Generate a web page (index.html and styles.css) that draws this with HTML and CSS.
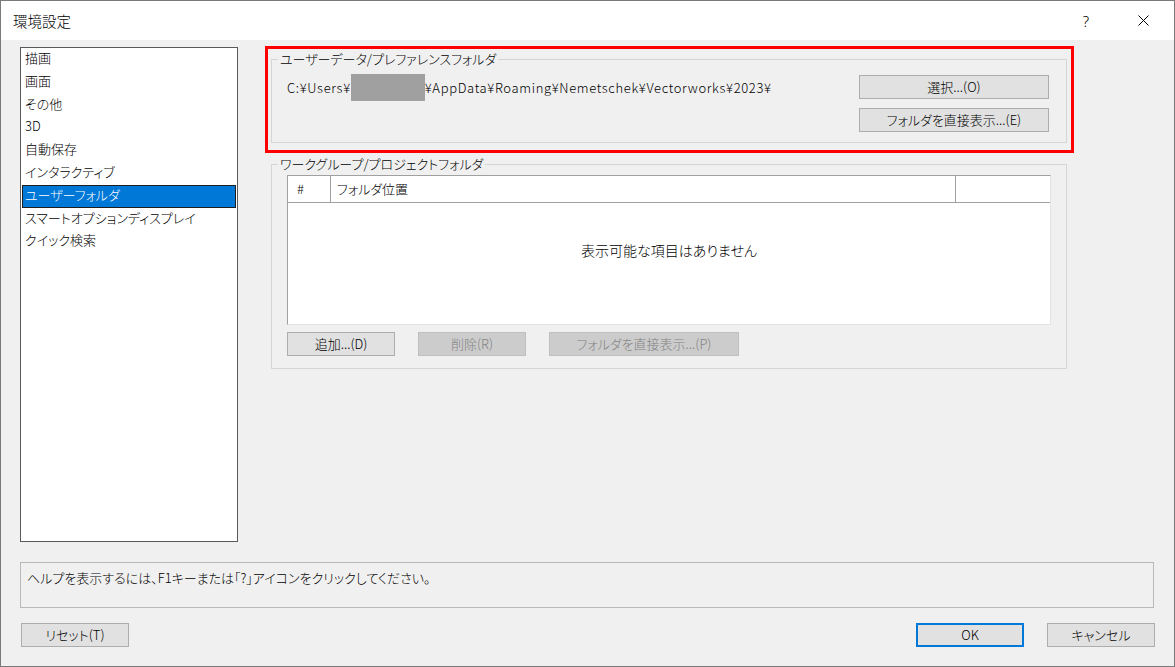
FILE: index.html
```html
<!DOCTYPE html>
<html lang="ja">
<head>
    <meta charset="UTF-8">
    <title>環境設定</title>
    <link rel="stylesheet" href="styles.css">
</head>
<body>
    <div class="window">
        <div class="titlebar">
            <span class="title">環境設定</span>
            <span class="caption-btn help">?</span>
            <span class="caption-btn close">
                <svg width="11" height="11" viewBox="0 0 11 11">
                    <path d="M0.5 0.5L10.5 10.5M10.5 0.5L0.5 10.5" stroke="#000" stroke-width="1" fill="none"/>
                </svg>
            </span>
        </div>

        <div class="client">
            <div class="main">
                <ul class="category-list">
                    <li>描画</li>
                    <li>画面</li>
                    <li>その他</li>
                    <li>3D</li>
                    <li>自動保存</li>
                    <li>インタラクティブ</li>
                    <li class="selected">ユーザーフォルダ</li>
                    <li>スマートオプションディスプレイ</li>
                    <li>クイック検索</li>
                </ul>

                <div class="panel">
                    <div class="highlight">
                        <fieldset class="group">
                            <legend>ユーザーデータ/プレファレンスフォルダ</legend>
                            <div class="user-folder">
                                <div class="path">C:¥Users¥<span class="redacted"></span>¥AppData¥Roaming¥Nemetschek¥Vectorworks¥2023¥</div>
                                <div class="btn-col">
                                    <button class="btn wide">選択...(O)</button>
                                    <button class="btn wide">フォルダを直接表示...(E)</button>
                                </div>
                            </div>
                        </fieldset>
                    </div>

                    <fieldset class="group workgroup">
                        <legend>ワークグループ/プロジェクトフォルダ</legend>
                        <div class="listview">
                            <div class="lv-header">
                                <div class="col col-num">#</div>
                                <div class="col col-path">フォルダ位置</div>
                                <div class="col col-rest"></div>
                            </div>
                            <div class="lv-body">表示可能な項目はありません</div>
                        </div>
                        <div class="btn-row">
                            <button class="btn">追加...(D)</button>
                            <button class="btn" disabled>削除(R)</button>
                            <button class="btn wide" disabled>フォルダを直接表示...(P)</button>
                        </div>
                    </fieldset>
                </div>
            </div>

            <div class="helpbox">ヘルプを表示するには、F1キーまたは「?」アイコンをクリックしてください。</div>

            <div class="footer">
                <button class="btn">リセット(T)</button>
                <div class="footer-right">
                    <button class="btn default">OK</button>
                    <button class="btn">キャンセル</button>
                </div>
            </div>
        </div>
    </div>
</body>
</html>
```

FILE: styles.css
```css
:root {
    --face: #f0f0f0;
    --btn-bg: #e1e1e1;
    --btn-border: #adadad;
    --accent: #0078d7;
    --text: #000000;
}

* {
    box-sizing: border-box;
}

body {
    margin: 0;
    font-family: "Noto Sans CJK JP", "Noto Sans", sans-serif;
    font-size: 13px;
    font-weight: 300;
    font-feature-settings: "palt";
    color: var(--text);
    background: #ffffff;
}

.window {
    width: 1175px;
    height: 667px;
    border: 1px solid #7a7a7a;
    display: flex;
    flex-direction: column;
    overflow: hidden;
}

/* title bar */
.titlebar {
    height: 39px;
    background: #ffffff;
    display: flex;
    align-items: center;
    padding-left: 12px;
    padding-right: 8px;
    flex-shrink: 0;
}

.title {
    font-size: 14.5px;
    line-height: 20px;
    flex: 1;
}

.caption-btn {
    width: 46px;
    height: 30px;
    display: flex;
    align-items: center;
    justify-content: center;
}

.help {
    font-family: "Noto Sans", sans-serif;
    font-size: 15px;
    margin-right: 11px;
}

/* client area */
.client {
    flex: 1;
    background: var(--face);
    display: flex;
    flex-direction: column;
    padding: 0 20px 0 19px;
}

.main {
    display: flex;
    align-items: flex-start;
    padding-top: 6px;
}

.category-list {
    list-style: none;
    margin: 1px 0 0 0;
    padding: 0;
    width: 218px;
    height: 495px;
    background: #ffffff;
    border: 1px solid #5a5a5a;
    flex-shrink: 0;
}

.category-list li {
    height: 22.8px;
    line-height: 18px;
    margin: 0 1px;
    padding-left: 2px;
    border: 1px solid transparent;
    font-size: 13px;
    white-space: nowrap;
}

.category-list li.selected {
    background: var(--accent);
    color: #ffffff;
    border-color: #1e1e1e;
}

.panel {
    width: 809px;
    margin-left: 27px;
}

.highlight {
    border: 3px solid #ff0000;
    padding: 2px 4px 7px 3px;
}

/* group boxes */
.group {
    margin: 0;
    border: 1px solid #d5d5d5;
    padding: 8px 17px 10px 15px;
    min-width: 0;
}

.group legend {
    padding: 0 2px;
    margin-left: -9px;
    line-height: 16px;
}

.user-folder {
    display: flex;
    justify-content: space-between;
    align-items: flex-start;
}

.path {
    display: flex;
    align-items: center;
    height: 24px;
    white-space: nowrap;
    letter-spacing: 0.65px;
}

.redacted {
    display: inline-block;
    width: 74px;
    height: 27px;
    background: #a0a0a0;
}

.btn-col {
    display: flex;
    flex-direction: column;
    gap: 9px;
}

.btn {
    width: 108px;
    height: 24px;
    padding: 0;
    background: var(--btn-bg);
    border: 1px solid var(--btn-border);
    font-family: inherit;
    font-size: 13px;
    font-weight: 300;
    font-feature-settings: "palt";
    color: var(--text);
    line-height: 20px;
}

.btn.wide {
    width: 190px;
}

.btn:disabled {
    background: #cccccc;
    border-color: #bfbfbf;
    color: #838383;
}

.btn.default {
    border: 2px solid var(--accent);
}

.workgroup {
    margin: 3px 7px 0 6px;
    padding: 3px 15px 12px 15px;
}

/* list view */
.listview {
    height: 150px;
    background: #ffffff;
    border-top: 1px solid #a0a0a0;
    border-left: 1px solid #a0a0a0;
    border-right: 1px solid #e3e3e3;
    border-bottom: 1px solid #e3e3e3;
}

.lv-header {
    display: flex;
    height: 27px;
    border-bottom: 1px solid #a0a0a0;
}

.col {
    line-height: 26px;
    white-space: nowrap;
}

.col-num {
    width: 43px;
    padding-left: 9px;
    border-right: 1px solid #a0a0a0;
}

.col-path {
    width: 625px;
    padding-left: 6px;
    border-right: 1px solid #a0a0a0;
}

.col-rest {
    flex: 1;
}

.lv-body {
    text-align: center;
    padding-top: 38px;
    line-height: 18px;
    font-size: 14px;
}

.btn-row {
    display: flex;
    gap: 23px;
    margin-top: 7px;
}

/* bottom */
.helpbox {
    margin-top: 20px;
    height: 46px;
    border: 1px solid #b9b9b9;
    padding: 6px 0 0 6px;
    line-height: 17px;
}

.footer {
    display: flex;
    justify-content: space-between;
    margin-top: 15px;
    padding-left: 1px;
    margin-right: -1px;
}

.footer-right {
    display: flex;
    gap: 23px;
}
```
